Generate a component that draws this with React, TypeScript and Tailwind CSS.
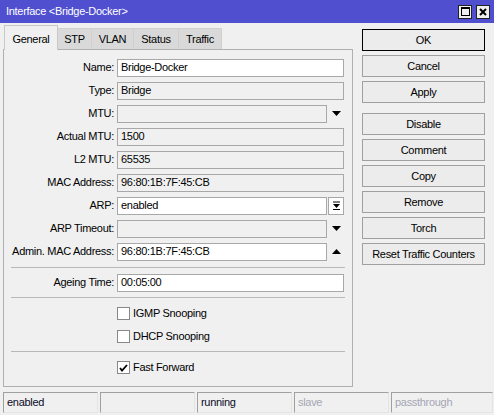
const font = { fontFamily: '"Liberation Sans", Arial, sans-serif' };

const Tab = ({ label, w, active }: { label: string; w: string; active?: boolean }) => (
    <div
        className={
            active
                ? `${w} relative z-10 -mb-px flex h-[25px] items-start justify-center border border-b-0 border-[#c8c8c8] bg-[#f0f0f0] pt-[5px]`
                : `${w} -ml-px flex h-[21px] items-center justify-center border border-b-0 border-[#d0d0d0] bg-[#d9d9d9] first:ml-0`
        }
    >
        {label}
    </div>
);

const DownArrow = () => (
    <svg width="9" height="5" viewBox="0 0 9 5">
        <path d="M0 0h9L4.5 5z" fill="#000" />
    </svg>
);

const UpArrow = () => (
    <svg width="9" height="5" viewBox="0 0 9 5">
        <path d="M0 5h9L4.5 0z" fill="#000" />
    </svg>
);

const Field = ({
    label,
    value,
    white,
    narrow,
    extra,
}: {
    label: string;
    value?: string;
    white?: boolean;
    narrow?: boolean;
    extra?: React.ReactNode;
}) => (
    <div className="flex h-[23px] items-center">
        <div className="w-[110px] text-right">{label}</div>
        <div
            className={`ml-[3px] flex h-[18px] items-center border border-[#a8a8a8] pl-[3px] ${
                narrow ? 'w-[210px]' : 'w-[227px]'
            } ${white ? 'bg-white' : 'bg-[#f0f0f0]'}`}
        >
            {value}
        </div>
        {narrow && <div className="flex w-[17px] items-center justify-center pl-[1px]">{extra}</div>}
    </div>
);

const Check = ({ label, checked }: { label: string; checked?: boolean }) => (
    <div className="flex h-[23px] items-center pl-[113px]">
        <div className="flex h-[13px] w-[13px] items-center justify-center border border-[#888] bg-white">
            {checked && (
                <svg width="9" height="8" viewBox="0 0 9 8">
                    <path d="M1 4l2 2.5L8 1" stroke="#000" strokeWidth="1.8" fill="none" />
                </svg>
            )}
        </div>
        <span className="ml-[3px]">{label}</span>
    </div>
);

const Sep = () => <div className="ml-[7px] w-[334px] border-t border-[#b8b8b8]" />;

const Btn = ({ label, primary, className = '' }: { label: string; primary?: boolean; className?: string }) => (
    <div
        className={`flex h-[22px] w-[123px] items-center justify-center border bg-[#ececec] ${
            primary ? 'border-black' : 'border-[#a0a0a0]'
        } ${className}`}
    >
        {label}
    </div>
);

const Cell = ({ text, w, dim }: { text: string; w: string; dim?: boolean }) => (
    <div
        className={`${w} flex h-[21px] items-center border border-t-[#a0a0a0] border-l-[#a0a0a0] border-r-[#e4e4e4] border-b-[#e4e4e4] pl-[3px] ${
            dim ? 'text-[#a6a6b4]' : 'text-[#0a0a28]'
        }`}
    >
        {text}
    </div>
);

export default function App() {
    return (
        <div
            className="flex h-[415px] w-[494px] flex-col overflow-hidden bg-[#f0f0f0] text-[11px] tracking-[-0.3px] text-black"
            style={font}
        >
            {/* title bar */}
            <div className="flex h-[23px] shrink-0 items-center bg-[#4f4fcf] pl-[6px] pr-[4px] text-[11px] text-white">
                <span className="flex-1">Interface &lt;Bridge-Docker&gt;</span>
                <div className="flex h-[14px] w-[14px] items-center justify-center border border-[#222] bg-[#f0f0f0]">
                    <div className="h-[9px] w-[9px] border border-t-2 border-black" />
                </div>
                <div className="ml-[4px] flex h-[14px] w-[14px] items-center justify-center border border-[#222] bg-[#f0f0f0]">
                    <svg width="8" height="8" viewBox="0 0 8 8">
                        <path d="M1 1l6 6M7 1L1 7" stroke="#000" strokeWidth="2" />
                    </svg>
                </div>
            </div>

            <div className="flex">
                {/* left: tabs + panel */}
                <div className="ml-[3px] flex w-[350px] flex-col">
                    <div className="mt-[2px] flex h-[24px] items-end pl-[1px]">
                        <Tab label="General" w="w-[54px]" active />
                        <Tab label="STP" w="w-[35px]" />
                        <Tab label="VLAN" w="w-[43px]" />
                        <Tab label="Status" w="w-[46px]" />
                        <Tab label="Traffic" w="w-[44px]" />
                    </div>
                    <div className="flex h-[338px] flex-col border border-[#b0b0b0] pt-[6px]">
                        <Field label="Name:" value="Bridge-Docker" white />
                        <Field label="Type:" value="Bridge" />
                        <Field label="MTU:" white={false} narrow extra={<DownArrow />} />
                        <Field label="Actual MTU:" value="1500" />
                        <Field label="L2 MTU:" value="65535" />
                        <Field label="MAC Address:" value="96:80:1B:7F:45:CB" />
                        <Field
                            label="ARP:"
                            value="enabled"
                            white
                            narrow
                            extra={
                                <div className="flex h-[18px] w-[16px] items-center justify-center border border-[#a8a8a8] bg-white">
                                    <svg width="9" height="9" viewBox="0 0 9 9">
                                        <path d="M1 1h7" stroke="#000" strokeWidth="1" />
                                        <path d="M1 3h7L4.5 7z" fill="#000" />
                                        <path d="M1 8.5h7" stroke="#000" strokeWidth="1" />
                                    </svg>
                                </div>
                            }
                        />
                        <Field label="ARP Timeout:" narrow extra={<DownArrow />} />
                        <Field label="Admin. MAC Address:" value="96:80:1B:7F:45:CB" white narrow extra={<UpArrow />} />
                        <div className="mt-[4px]" />
                        <Sep />
                        <div className="mt-[3px]">
                            <Field label="Ageing Time:" value="00:05:00" white />
                        </div>
                        <div className="mt-[3px]" />
                        <Sep />
                        <div className="mt-[4px]">
                            <Check label="IGMP Snooping" />
                            <Check label="DHCP Snooping" />
                        </div>
                        <div className="mt-[3px]" />
                        <Sep />
                        <div className="mt-[4px]">
                            <Check label="Fast Forward" checked />
                        </div>
                    </div>
                </div>

                {/* right: buttons */}
                <div className="ml-[9px] mt-[6px] flex flex-col gap-[4px]">
                    <Btn label="OK" primary />
                    <Btn label="Cancel" />
                    <Btn label="Apply" />
                    <Btn label="Disable" className="mt-[6px]" />
                    <Btn label="Comment" />
                    <Btn label="Copy" />
                    <Btn label="Remove" />
                    <Btn label="Torch" />
                    <Btn label="Reset Traffic Counters" />
                </div>
            </div>

            {/* status bar */}
            <div className="ml-[3px] mt-[5px] flex gap-[2px]">
                <Cell text="enabled" w="w-[95px]" />
                <Cell text="" w="w-[95px]" />
                <Cell text="running" w="w-[95px]" />
                <Cell text="slave" w="w-[95px]" dim />
                <Cell text="passthrough" w="w-[102px]" dim />
            </div>
        </div>
    );
}
